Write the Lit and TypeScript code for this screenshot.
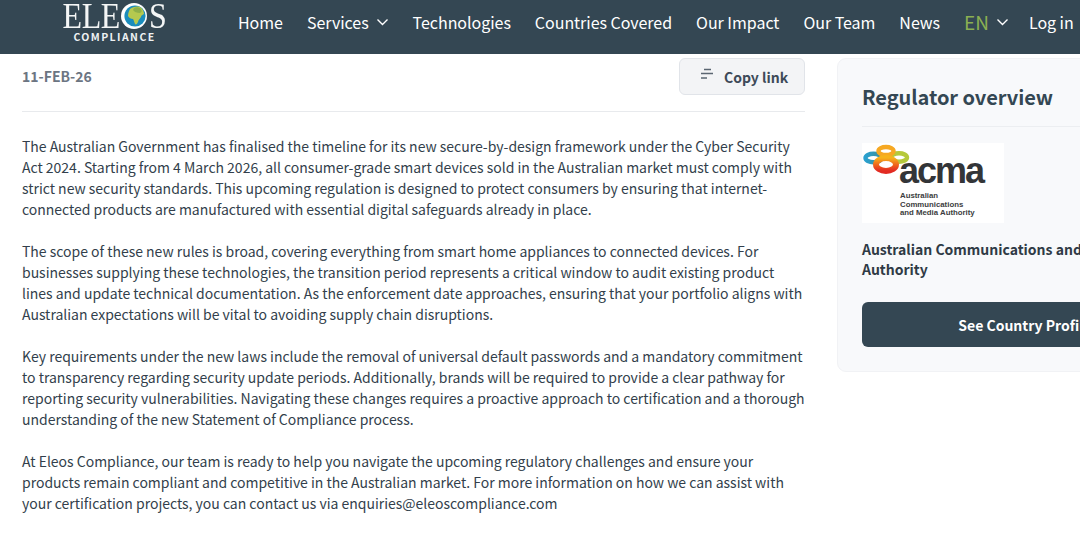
import { LitElement, html, css } from "lit";
import { customElement } from "lit/decorators.js";

@customElement("app-root")
export class AppRoot extends LitElement {
  static styles = css`
    :host {
      display: block;
      width: 1080px;
      height: 541px;
      overflow: hidden;
      background: #fff;
      font-family: "Noto Sans CJK SC", "Noto Sans", sans-serif;
      color: #2f3e4a;
    }
    header {
      height: 54px;
      background: #344753;
      display: flex;
      align-items: flex-start;
      color: #fff;
      white-space: nowrap;
    }
    .logo {
      margin-left: 63px;
      width: 103px;
      display: flex;
      flex-direction: column;
      align-items: center;
      flex: none;
    }
    .word {
      display: flex;
      align-items: center;
      height: 31px;
      font-family: "Liberation Serif", serif;
      font-size: 32px;
      line-height: 26px;
      letter-spacing: -0.4px;
      color: #f4f6f6;
    }
    .word span { display: block; transform: scaleY(1.12); }
    .word svg { width: 26px; height: 26px; margin: 0 2px 0 1px; }
    .comp {
      font-size: 10.5px;
      font-weight: 700;
      letter-spacing: 1.42px;
      line-height: 12px;
      color: #eef1f2;
    }
    nav {
      display: flex;
      align-items: center;
      margin-left: 72px;
      gap: 24px;
      font-size: 16px;
      line-height: 24px;
      padding-top: 10px;
      letter-spacing: -0.03px;
    }
    nav a { display: flex; align-items: center; gap: 7px; }
    nav svg { width: 13px; height: 8px; }
    .en { color: #8bb052; font-size: 19px; }
    .lang { display: flex; align-items: center; gap: 7px; }
    .login { margin-left: -4px; }
    main {
      display: flex;
      align-items: flex-start;
      gap: 32px;
      padding: 4px 0 0 22px;
    }
    .article { width: 783px; flex: none; }
    .meta {
      display: flex;
      justify-content: space-between;
      align-items: flex-start;
      height: 37px;
      padding-bottom: 16px;
      border-bottom: 1px solid #e8eaed;
    }
    .date { font-size: 14px; font-weight: 700; color: #6c7582; line-height: 37px; }
    .copy {
      width: 126px;
      height: 37px;
      box-sizing: border-box;
      border: 1px solid #e1e4e9;
      border-radius: 6px;
      background: #f3f4f6;
      display: flex;
      align-items: center;
      padding-left: 20px;
      gap: 12px;
      font-size: 14px;
      font-weight: 700;
      color: #3d4a58;
    }
    .copy svg { width: 13px; height: 12px; margin-top: -5px; margin-right: -1px; }
    .body { padding-top: 24px; }
    p {
      margin: 0 0 21px;
      font-size: 14px;
      line-height: 21px;
      letter-spacing: -0.014px;
      color: #333f4c;
    }
    .card {
      width: 376px;
      height: 314px;
      flex: none;
      box-sizing: border-box;
      background: #f8f9fb;
      border: 1px solid #f1f2f5;
      border-radius: 9px;
      padding: 0 24px;
    }
    h2 {
      margin: 0;
      padding: 23px 0 15px;
      font-size: 20px;
      line-height: 29px;
      font-weight: 700;
      letter-spacing: -0.05px;
      color: #344753;
      border-bottom: 1px solid #eceef1;
    }
    .acma {
      display: block;
      width: 142px;
      height: 80px;
      margin-top: 16px;
    }
    .name {
      margin-top: 16px;
      font-size: 14px;
      line-height: 20px;
      font-weight: 700;
      color: #2f3a45;
    }
    .btn {
      margin-top: 23px;
      height: 45px;
      border-radius: 6px;
      background: #344753;
      color: #fff;
      font-size: 14px;
      font-weight: 700;
      display: flex;
      align-items: center;
      justify-content: center;
    }
  `;

  render() {
    const chev = html`<svg viewBox="0 0 13 8" fill="none" stroke="#fff" stroke-width="1.4"><path d="M1.5 1.5 6.5 6.5 11.5 1.5"/></svg>`;
    return html`
      <header>
        <div class="logo">
          <div class="word">
            <span>ELE</span>
            <svg viewBox="0 0 26 26">
              <circle cx="13" cy="13" r="13" fill="#fff"/>
              <circle cx="14" cy="13" r="10.6" fill="#1b8dbd"/>
              <path d="M9 6c2-2 7-3 10-2 2 1 4 4 4 7-1 1-3 1-3 3-1 2-3 3-3 5-1 2-2 3-3 2-1-2-1-4-2-5-2 0-4-1-5-3 0-3 1-5 2-7z" fill="#b6c94f"/>
              <path d="M13 5c2-1 5-1 7 1 1 2 1 3-1 4-3 0-6-1-7-3z" fill="#8fb04a"/>
            </svg>
            <span>S</span>
          </div>
          <div class="comp">COMPLIANCE</div>
        </div>
        <nav>
          <a>Home</a>
          <a>Services ${chev}</a>
          <a>Technologies</a>
          <a>Countries Covered</a>
          <a>Our Impact</a>
          <a>Our Team</a>
          <a>News</a>
          <span class="lang"><span class="en">EN</span>${chev}</span>
          <a class="login">Log in</a>
        </nav>
      </header>
      <main>
        <section class="article">
          <div class="meta">
            <span class="date">11-FEB-26</span>
            <span class="copy">
              <svg viewBox="0 0 13 12" fill="none" stroke="#5b6672" stroke-width="1.7"><path d="M4 1.5h7M1 5.5h12M1 10h6"/></svg>
              Copy link
            </span>
          </div>
          <div class="body">
            <p>The Australian Government has finalised the timeline for its new secure-by-design framework under the Cyber Security Act 2024. Starting from 4 March 2026, all consumer-grade smart devices sold in the Australian market must comply with strict new security standards. This upcoming regulation is designed to protect consumers by ensuring that internet-connected products are manufactured with essential digital safeguards already in place.</p>
            <p>The scope of these new rules is broad, covering everything from smart home appliances to connected devices. For businesses supplying these technologies, the transition period represents a critical window to audit existing product lines and update technical documentation. As the enforcement date approaches, ensuring that your portfolio aligns with Australian expectations will be vital to avoiding supply chain disruptions.</p>
            <p>Key requirements under the new laws include the removal of universal default passwords and a mandatory commitment to transparency regarding security update periods. Additionally, brands will be required to provide a clear pathway for reporting security vulnerabilities. Navigating these changes requires a proactive approach to certification and a thorough understanding of the new Statement of Compliance process.</p>
            <p>At Eleos Compliance, our team is ready to help you navigate the upcoming regulatory challenges and ensure your products remain compliant and competitive in the Australian market. For more information on how we can assist with your certification projects, you can contact us via enquiries@eleoscompliance.com</p>
          </div>
        </section>
        <aside class="card">
          <h2>Regulator overview</h2>
          <svg class="acma" viewBox="0 0 142 80">
            <defs>
              <linearGradient id="rg" x1="0" y1="0" x2="0" y2="1">
                <stop offset="0" stop-color="#f6b21c"/>
                <stop offset="0.6" stop-color="#ee5a1e"/>
                <stop offset="1" stop-color="#e22a22"/>
              </linearGradient>
              <linearGradient id="bg" x1="0" y1="0" x2="1" y2="0">
                <stop offset="0" stop-color="#2aa0cf"/>
                <stop offset="1" stop-color="#3a8f9a"/>
              </linearGradient>
              <filter id="soft"><feGaussianBlur stdDeviation="0.35"/></filter>
            </defs>
            <rect width="142" height="80" fill="#fff"/>
            <g fill="none" filter="url(#soft)">
              <ellipse cx="11.5" cy="15" rx="8" ry="4.2" stroke="url(#bg)" stroke-width="4.4"/>
              <ellipse cx="37" cy="14.5" rx="8" ry="4.2" stroke="#b5c93a" stroke-width="4.4"/>
              <ellipse cx="24" cy="8" rx="7.5" ry="4" stroke="#f6a823" stroke-width="4.4"/>
              <ellipse cx="24" cy="21.5" rx="10" ry="6.5" stroke="url(#rg)" stroke-width="6"/>
            </g>
            <text x="37" y="40" font-family="Liberation Sans, sans-serif" font-size="36" font-weight="700" letter-spacing="-2" fill="#333538">acma</text>
            <text font-family="Liberation Sans, sans-serif" font-size="7.8" font-weight="700" fill="#3c3d40">
              <tspan x="38" y="55">Australian</tspan>
              <tspan x="38" y="63.5">Communications</tspan>
              <tspan x="38" y="72">and Media Authority</tspan>
            </text>
          </svg>
          <div class="name">Australian Communications and Media Authority</div>
          <div class="btn">See Country Profile</div>
        </aside>
      </main>
    `;
  }
}
